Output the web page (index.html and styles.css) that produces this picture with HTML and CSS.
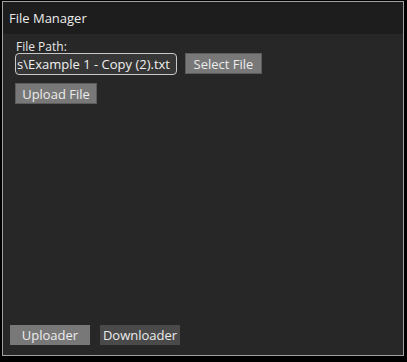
FILE: index.html
```html
<!DOCTYPE html>
<html lang="en">
   <head>
      <meta charset="UTF-8" />
      <title>File Manager</title>
      <link rel="stylesheet" href="styles.css">
   </head>
   <body>
      <div class="window">
         <div class="title-bar">File Manager</div>
         <div class="content">
            <div class="field-label">File Path:</div>
            <div class="path-row">
               <input class="path-input" type="text" value="s\Example 1 - Copy (2).txt" />
               <button class="button select-button">Select File</button>
            </div>
            <button class="button upload-button">Upload File</button>
         </div>
         <div class="tab-bar">
            <button class="tab active">Uploader</button>
            <button class="tab">Downloader</button>
         </div>
      </div>
   </body>
</html>
```

FILE: styles.css
```css
body {
background-color: #000;
color: #e8e8e8;
font-family: "Open Sans", "Noto Sans", sans-serif;
margin: 0;
padding: 1px 3px 6px 2px;
box-sizing: border-box;
height: 362px;
overflow: hidden;
}
.window {
height: 355px;
box-sizing: border-box;
border: 1px solid #a0a0a0;
background-color: #272727;
display: flex;
flex-direction: column;
}
.title-bar {
height: 32px;
background-color: #1d1d1d;
font-size: 13px;
line-height: 32px;
padding-left: 6px;
color: #ececec;
}
.content {
flex: 1;
padding: 6px 12px 0 12px;
display: flex;
flex-direction: column;
align-items: flex-start;
}
.field-label {
font-size: 12px;
line-height: 13px;
padding-left: 1px;
color: #e8e8e8;
}
.path-row {
display: flex;
align-items: flex-start;
gap: 8px;
}
.path-input {
width: 162px;
height: 22px;
box-sizing: border-box;
background-color: #363636;
border: 1px solid #c8c8c8;
border-radius: 4px;
color: #f0f0f0;
font-family: "Open Sans", "Noto Sans", sans-serif;
font-size: 13px;
padding: 0 1px;
margin: 0;
outline: none;
}
.button {
height: 21px;
box-sizing: border-box;
background-color: #787878;
border: 1px solid #5c5c5c;
color: #ececec;
font-family: "Open Sans", "Noto Sans", sans-serif;
font-size: 13px;
padding: 0;
margin: 0;
line-height: 18px;
}
.select-button {
width: 77px;
}
.upload-button {
width: 82px;
margin-top: 8px;
}
.tab-bar {
display: flex;
gap: 10px;
padding: 0 0 10px 7px;
}
.tab {
width: 80px;
height: 20px;
border: none;
background-color: #4a4a4a;
color: #ececec;
font-family: "Open Sans", "Noto Sans", sans-serif;
font-size: 13px;
padding: 0;
line-height: 20px;
}
.tab.active {
background-color: #787878;
}
```
